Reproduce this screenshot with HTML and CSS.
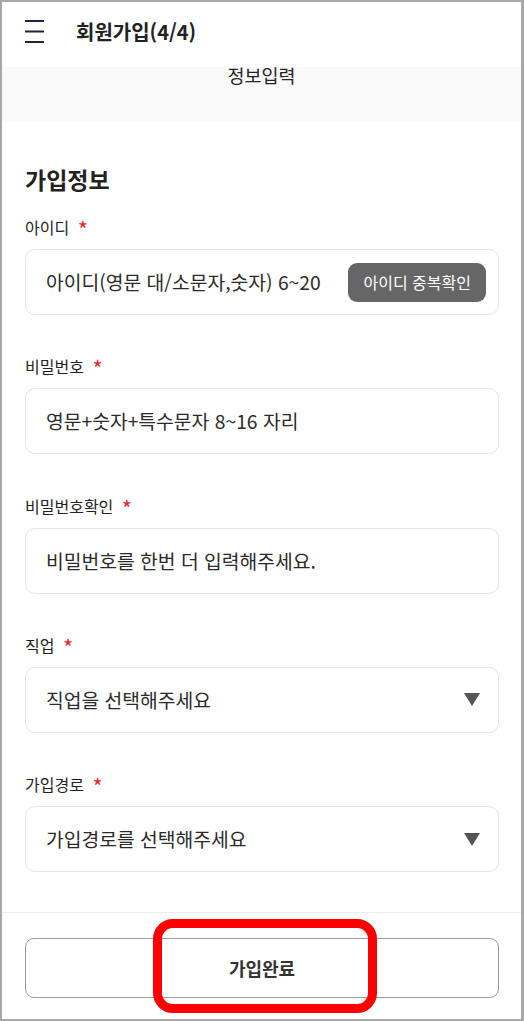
FILE: index.html
```html
<!DOCTYPE html>
<html lang="ko">
<head>
<meta charset="utf-8">
<title>회원가입(4/4)</title>
<link rel="stylesheet" href="styles.css">
</head>
<body>
<div class="frame">
  <header class="topbar">
    <svg class="burger" width="20" height="24" viewBox="0 0 20 24" aria-hidden="true">
      <rect x="0" y="0" width="19" height="2" fill="#1b2540"/>
      <rect x="0" y="10.5" width="19" height="2" fill="#1b2540"/>
      <rect x="0" y="21" width="19" height="2" fill="#1b2540"/>
    </svg>
    <h1 class="title">회원가입(4/4)</h1>
  </header>
  <div class="step">정보입력</div>
  <main class="content">
    <h2 class="section">가입정보</h2>
    <div class="field">
      <div class="label">아이디 <span class="req">*</span></div>
      <div class="box">
        <span class="ph">아이디(영문 대/소문자,숫자) 6~20</span>
        <button class="check">아이디 중복확인</button>
      </div>
    </div>
    <div class="field">
      <div class="label">비밀번호 <span class="req">*</span></div>
      <div class="box"><span class="ph">영문+숫자+특수문자 8~16 자리</span></div>
    </div>
    <div class="field">
      <div class="label">비밀번호확인 <span class="req">*</span></div>
      <div class="box"><span class="ph">비밀번호를 한번 더 입력해주세요.</span></div>
    </div>
    <div class="field">
      <div class="label">직업 <span class="req">*</span></div>
      <div class="box"><span class="ph">직업을 선택해주세요</span><span class="caret"></span></div>
    </div>
    <div class="field">
      <div class="label">가입경로 <span class="req">*</span></div>
      <div class="box"><span class="ph">가입경로를 선택해주세요</span><span class="caret"></span></div>
    </div>
  </main>
  <footer class="footer">
    <button class="submit">가입완료</button>
  </footer>
  <div class="highlight"></div>
</div>
</body>
</html>
```

FILE: styles.css
```css
* { box-sizing: border-box; }
html, body { margin: 0; padding: 0; background: #fff; }
body {
  font-family: "Noto Sans CJK KR", "Noto Sans", sans-serif;
  color: #222;
}
.frame {
  position: relative;
  width: 524px;
  height: 1021px;
  border: 2px solid #a8a8a8;
  border-right-width: 3px;
  display: flex;
  flex-direction: column;
  overflow: hidden;
}
.topbar {
  height: 65px;
  flex-shrink: 0;
  display: flex;
  align-items: center;
  padding: 0 0 5px 23px;
}
.burger { display: block; }
.title {
  margin: 0 0 0 31px;
  font-size: 20px;
  font-weight: 700;
  line-height: 26px;
  color: #222;
}
.step {
  height: 55px;
  flex-shrink: 0;
  background: #fafafa;
  text-align: center;
  font-size: 18.5px;
  line-height: 17px;
  color: #222;
}
.content {
  flex: 1;
  padding: 42px 22px 0 23px;
}
.section {
  margin: 0 0 21px;
  font-size: 23px;
  line-height: 30px;
  font-weight: 700;
  color: #222;
}
.field { margin-bottom: 39.25px; }
.field:last-child { margin-bottom: 0; }
.label {
  font-size: 16px;
  line-height: 24px;
  color: #222;
  margin-bottom: 10px;
}
.req {
  color: #e8282b;
  font-size: 22px;
  line-height: 0;
  margin-left: 4px;
  vertical-align: -4px;
}
.box {
  height: 66px;
  border: 1px solid #e4e4e4;
  border-radius: 10px;
  display: flex;
  align-items: center;
  justify-content: space-between;
  padding: 0 12px 0 20px;
}
.ph {
  font-size: 19.3px;
  color: #2a2a2a;
}
.check {
  height: 39px;
  padding: 0 15px;
  background: #666;
  color: #fff;
  border: 0;
  border-radius: 9px;
  font-family: inherit;
  font-size: 16px;
}
.caret {
  width: 0;
  height: 0;
  margin-right: 6px;
  border-left: 8px solid transparent;
  border-right: 8px solid transparent;
  border-top: 13px solid #555;
}
.footer {
  flex-shrink: 0;
  height: 107px;
  border-top: 1px solid #eeeeee;
  padding: 25px 22px 21px 23px;
}
.submit {
  width: 100%;
  height: 60px;
  background: #fff;
  border: 1px solid #999;
  border-radius: 9px;
  font-family: inherit;
  font-size: 18px;
  font-weight: 700;
  color: #333;
}
.highlight {
  position: absolute;
  left: 151px;
  top: 917px;
  width: 224px;
  height: 94px;
  border: 9px solid #ff0000;
  border-radius: 20px;
}
```
